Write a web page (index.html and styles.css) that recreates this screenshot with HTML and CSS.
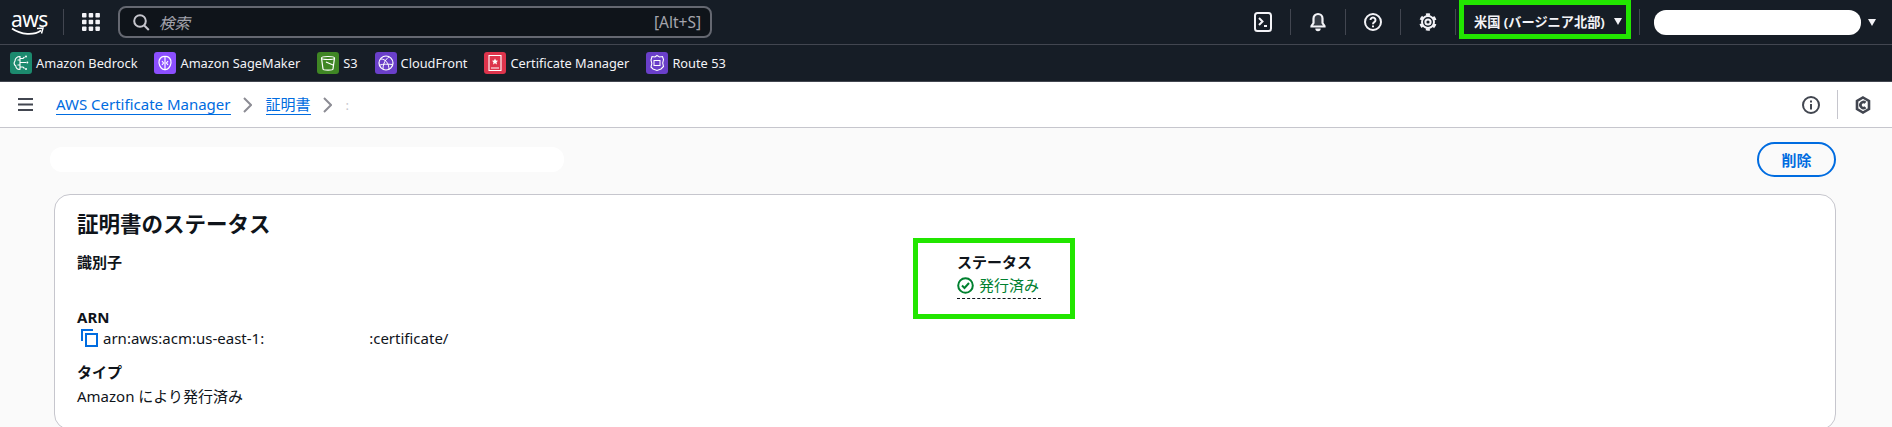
FILE: index.html
```html
<!DOCTYPE html>
<html lang="ja">

<head>
    <meta charset="UTF-8">
    <title>証明書のステータス</title>
    <link rel="stylesheet" href="styles.css">
</head>

<body>
    <header class="topbar">
        <div class="logo">
            <span class="logo_text">aws</span>
            <svg class="logo_smile" width="34" height="9" viewBox="0 0 34 9"><path d="M1 1.500C10 8 23 8.500 30 3.500" fill="none" stroke="#fff" stroke-width="1.800"/><path d="M26 1.500L32 1L30.500 6.500" fill="none" stroke="#fff" stroke-width="1.500"/></svg>
        </div>
        <span class="sep sep_logo"></span>
        <svg class="apps" width="18" height="18" viewBox="0 0 18 18" fill="#f3f3f7"><rect width="4.500" height="4.500" rx=".8"/><rect x="6.700" width="4.500" height="4.500" rx=".8"/><rect x="13.400" width="4.500" height="4.500" rx=".8"/><rect y="6.700" width="4.500" height="4.500" rx=".8"/><rect x="6.700" y="6.700" width="4.500" height="4.500" rx=".8"/><rect x="13.400" y="6.700" width="4.500" height="4.500" rx=".8"/><rect y="13.400" width="4.500" height="4.500" rx=".8"/><rect x="6.700" y="13.400" width="4.500" height="4.500" rx=".8"/><rect x="13.400" y="13.400" width="4.500" height="4.500" rx=".8"/></svg>
        <div class="search">
            <svg width="17" height="17" viewBox="0 0 17 17" fill="none" stroke="#c6c6cd" stroke-width="2"><circle cx="7" cy="7" r="5.800"/><path d="M11 11.200L15.800 16"/></svg>
            <span class="search_ph">検索</span>
            <span class="search_key">[Alt+S]</span>
        </div>

        <div class="top_right">
            <svg class="top_icon" width="18" height="20" viewBox="0 0 18 20" fill="none" stroke="#f3f3f7" stroke-width="2"><rect x="1" y="1" width="16" height="18" rx="2.500"/><path d="M5 6l3.500 3.500L5 13M10 14h3"/></svg>
            <span class="sep"></span>
            <svg class="top_icon" width="18" height="20" viewBox="0 0 18 20" fill="#f3f3f7"><path d="M9 2a4.500 4.500 0 0 0-4.500 4.500V11L2.500 14v.5h13V14l-2-3V6.500A4.500 4.500 0 0 0 9 2z" fill="#f3f3f7" fill-opacity=".15" stroke="#f3f3f7" stroke-width="2.200"/><path d="M6.300 16.500h5.400a2.700 2.700 0 0 1-5.400 0z"/></svg>
            <span class="sep"></span>
            <svg class="top_icon" width="18" height="18" viewBox="0 0 18 18" fill="none" stroke="#f3f3f7" stroke-width="2"><circle cx="9" cy="9" r="8"/><path d="M6.500 7a2.500 2.500 0 1 1 3.800 2.100C9.400 9.700 9 10.200 9 11.200"/><path d="M9 12.500v1.800"/></svg>
            <span class="sep"></span>
            <svg class="top_icon" width="18" height="18" viewBox="0 0 18 18" fill="none" stroke="#f3f3f7"><circle cx="9" cy="9" r="6" stroke-width="2"/><circle cx="9" cy="9" r="7.500" stroke-width="2.400" stroke-dasharray="3.900 3.950" transform="rotate(-105 9 9)"/><circle cx="9" cy="9" r="2.600" stroke-width="2"/></svg>
            <span class="sep"></span>
            <div class="region">
                <span>米国 (バージニア北部)</span>
                <span class="caret"></span>
            </div>
            <span class="sep sep_user"></span>
            <span class="user_mask"></span>
            <span class="caret caret_user"></span>
        </div>
    </header>

    <nav class="shortcuts">
        <a class="shortcut">
            <svg class="svc" viewBox="0 0 22 22"><rect width="22" height="22" rx="3" fill="#1c8a6e"/><path d="M10 4.500C7 4.500 5 6.500 5 9c-1.500 2-.5 4 .8 5 0 2.500 2.200 3.800 4.200 3.300zM10 8H7.500M10 13H7.500M10 10.500h6M10 6.500h3l1.500-1.500M10 15h3l1.500 1.500" fill="none" stroke="#fff" stroke-width="1.100"/><circle cx="16" cy="4.500" r="1" fill="#fff"/><circle cx="17.300" cy="10.500" r="1" fill="#fff"/><circle cx="16" cy="17" r="1" fill="#fff"/></svg>
            Amazon Bedrock
        </a>
        <a class="shortcut">
            <svg class="svc" viewBox="0 0 22 22"><rect width="22" height="22" rx="3" fill="#8c4fff"/><path d="M11 4.500v13M11 4.500C7 4 4.500 7.500 5 11s3 7 6 6.500M11 4.500c4-.5 6.500 3 6 6.500s-3 7-6 6.500M8 9l1.500 2L8 13M14 9l-1.500 2 1.500 2" fill="none" stroke="#fff" stroke-width="1.200"/></svg>
            Amazon SageMaker
        </a>
        <a class="shortcut">
            <svg class="svc" viewBox="0 0 22 22"><rect width="22" height="22" rx="3" fill="#3f8624"/><path d="M4.500 6c0-2 13-2 13 0l-1.500 11c0 1.500-10 1.500-10 0zM4.500 6c0 2 13 2 13 0M9 10l7 3" fill="none" stroke="#fff" stroke-width="1.200"/></svg>
            S3
        </a>
        <a class="shortcut">
            <svg class="svc" viewBox="0 0 22 22"><rect width="22" height="22" rx="3" fill="#6a3fc9"/><circle cx="11" cy="11" r="7" fill="none" stroke="#fff" stroke-width="1.200"/><path d="M6 7c4 0 8 4 8 10.500M14 4.800C11 7 8 11 8 17M5 13c3-1 8-1 12.500-.5" fill="none" stroke="#fff" stroke-width="1"/></svg>
            CloudFront
        </a>
        <a class="shortcut">
            <svg class="svc" viewBox="0 0 22 22"><rect width="22" height="22" rx="3" fill="#dd344c"/><path d="M5 3.500h12v15H5zM7 16h8" fill="none" stroke="#fff" stroke-width="1.100"/><path d="M11 6.500l1 2 2 .2-1.500 1.500.5 2.200-2-1.100-2 1.100.5-2.200L8 8.700l2-.2z" fill="#fff"/></svg>
            Certificate Manager
        </a>
        <a class="shortcut">
            <svg class="svc" viewBox="0 0 22 22"><rect width="22" height="22" rx="3" fill="#6a3fc9"/><path d="M11 3.500l2.500 1.500 3-.5 1 3-.8 3.500.8 3.500-2.500 2.500-4 1.500-4-1.500L5 15l.8-3.500L5 8l1-3.500 3 .5z" fill="none" stroke="#fff" stroke-width="1.100"/><rect x="8" y="8.500" width="6" height="5" fill="none" stroke="#fff" stroke-width="1"/></svg>
            Route 53
        </a>
    </nav>

    <div class="crumbbar">
        <svg class="burger" width="17" height="15" viewBox="0 0 17 15" fill="none" stroke="#424650" stroke-width="2"><path d="M1 2h15M1 7.500h15M1 13h15"/></svg>
        <a class="crumb crumb_first">AWS Certificate Manager</a>
        <svg class="chev" width="9" height="16" viewBox="0 0 9 16" fill="none" stroke="#8c8c94" stroke-width="2"><path d="M1 1l7 7-7 7"/></svg>
        <a class="crumb">証明書</a>
        <svg class="chev" width="9" height="16" viewBox="0 0 9 16" fill="none" stroke="#8c8c94" stroke-width="2"><path d="M1 1l7 7-7 7"/></svg>
        <span class="crumb_cut">:</span>
        <div class="crumb_right">
            <svg width="18" height="18" viewBox="0 0 18 18" fill="none" stroke="#424650" stroke-width="2"><circle cx="9" cy="9" r="8"/><path d="M9 8v5.500M9 4.500v2"/></svg>
            <span class="crumb_sep"></span>
            <svg width="16" height="18" viewBox="0 0 16 18" fill="none" stroke="#424650" stroke-width="2.600"><path d="M8 1.500l6 3.500v8l-6 3.500L2 13V5z"/><path d="M10.500 6.800a3 3 0 1 0 0 4.400"/></svg>
        </div>
    </div>

    <main class="content">
        <div class="page_head">
            <span class="title_mask"></span>
            <button class="btn">削除</button>
        </div>

        <section class="card">
            <h2>証明書のステータス</h2>
            <div class="card_cols">
                <div class="col_left">
                    <div class="field field_id">
                        <h3>識別子</h3>
                    </div>
                    <div class="field field_arn">
                        <h3>ARN</h3>
                        <p class="arn">
                            <svg width="17" height="18" viewBox="0 0 17 18" fill="none" stroke="#006ce0" stroke-width="2"><path d="M1 12V1h11"/><rect x="5" y="5" width="11" height="12"/></svg>
                            <span>arn:aws:acm:us-east-1:</span><span class="arn_gap"></span><span>:certificate/</span>
                        </p>
                    </div>
                    <div class="field">
                        <h3>タイプ</h3>
                        <p class="type_val">Amazon により発行済み</p>
                    </div>
                </div>
                <div class="status_box">
                    <h3>ステータス</h3>
                    <p class="status">
                        <svg width="17" height="17" viewBox="0 0 17 17" fill="none" stroke="#00802f" stroke-width="2"><circle cx="8.500" cy="8.500" r="7.300"/><path d="M5 8.500l2.500 2.500L12 6"/></svg>
                        <span>発行済み</span>
                    </p>
                </div>
            </div>
        </section>
    </main>
</body>

</html>
```

FILE: styles.css
```css
* {
    box-sizing: border-box;
}

html,
body {
    height: 427px;
    overflow: hidden;
}

body {
    margin: 0;
    background-color: #fafafa;
    color: #0f141a;
    font-family: "Noto Sans", "Noto Sans CJK JP", sans-serif;
    font-size: 15px;
}

h2,
h3,
p {
    margin: 0;
}

/* top bar */
.topbar {
    display: flex;
    align-items: center;
    height: 45px;
    padding-left: 11px;
    background-color: #161d26;
    border-bottom: 1px solid #424650;
}

.logo {
    position: relative;
    width: 34px;
    height: 26px;
    color: #fff;
}

.logo_text {
    display: block;
    font-size: 21px;
    line-height: 21px;
    text-align: center;
    letter-spacing: -0.5px;
}

.logo_smile {
    position: absolute;
    left: 0;
    top: 18px;
}

.sep {
    width: 1px;
    height: 26px;
    background-color: #424650;
}

.sep_logo {
    margin: 0 18px;
}

.apps {
    margin-right: 18px;
}

.search {
    display: flex;
    align-items: center;
    width: 594px;
    height: 32px;
    padding: 0 9px 0 13px;
    background-color: #0f141a;
    border: 2px solid #656871;
    border-radius: 8px;
    color: #a4a4ad;
}

.search_ph {
    margin-left: 9px;
    font-style: italic;
    font-size: 15.500px;
}

.search_key {
    margin-left: auto;
    font-size: 15.500px;
}

.top_right {
    display: flex;
    align-items: center;
    margin-left: auto;
}

.top_icon {
    margin: 0 18px;
}

.region {
    display: flex;
    align-items: center;
    gap: 9px;
    width: 172px;
    height: 39px;
    margin: 0 8px 5px 3px;
    padding: 3px 0 0 10px;
    border: 5px solid #22e600;
    color: #f3f3f7;
    font-weight: 700;
    font-size: 13.200px;
}

.caret {
    width: 0;
    height: 0;
    border-left: 4px solid transparent;
    border-right: 4px solid transparent;
    border-top: 7px solid #f3f3f7;
}

.user_mask {
    width: 207px;
    height: 25px;
    margin-left: 14px;
    background-color: #fff;
    border-radius: 12px;
}

.caret_user {
    margin: 0 16px 0 7px;
}

/* favorites */
.shortcuts {
    display: flex;
    align-items: center;
    gap: 17px;
    height: 36px;
    padding-left: 10px;
    background-color: #161d26;
}

.shortcut {
    display: flex;
    align-items: center;
    gap: 4px;
    color: #f3f3f7;
    font-size: 12.800px;
}

.svc {
    width: 22px;
    height: 22px;
}

/* breadcrumbs */
.crumbbar {
    display: flex;
    align-items: center;
    height: 47px;
    padding-left: 17px;
    background-color: #fff;
    border-top: 1px solid #424650;
    border-bottom: 1px solid #c6c6cd;
}

.crumb {
    color: #006ce0;
    font-size: 15px;
    line-height: 20px;
    border-bottom: 1px solid #006ce0;
}

.crumb_first {
    margin-left: 22px;
}

.chev {
    margin: 0 14px 0 12px;
}

.crumb_cut {
    color: #c6c6cd;
    font-size: 13px;
}

.crumb_right {
    display: flex;
    align-items: center;
    margin-left: auto;
    margin-right: 21px;
}

.crumb_sep {
    width: 1px;
    height: 29px;
    margin: 0 17px;
    background-color: #c6c6cd;
}

/* content */
.content {
    padding: 13px 56px 0 54px;
}

.page_head {
    display: flex;
    align-items: center;
    justify-content: space-between;
    height: 36px;
    margin-bottom: 17px;
}

.title_mask {
    width: 514px;
    height: 25px;
    margin-left: -4px;
    background-color: #fff;
    border-radius: 12px;
}

.btn {
    width: 79px;
    height: 35px;
    padding: 0;
    background-color: transparent;
    border: 2px solid #006ce0;
    border-radius: 18px;
    color: #006ce0;
    font-family: inherit;
    font-size: 15px;
    font-weight: 700;
}

.card {
    height: 236px;
    padding: 14px 22px;
    background-color: #fff;
    border: 1px solid #c6c6cd;
    border-radius: 16px;
}

.card h2 {
    font-size: 21.500px;
    line-height: 30px;
    font-weight: 700;
}

.card h3 {
    font-size: 15px;
    line-height: 20px;
    font-weight: 700;
}

.card p {
    line-height: 22px;
}

.card_cols {
    display: flex;
}

.col_left {
    width: 836px;
    padding-top: 13px;
}

.field_id {
    height: 55px;
}

.field_arn {
    height: 55px;
}

.arn {
    display: flex;
    align-items: center;
}

.arn svg {
    margin: 0 5px 0 4px;
}

.arn_gap {
    width: 105px;
}

.card .type_val {
    margin-top: 3px;
}

.status_box {
    width: 162px;
    height: 81px;
    margin-top: -1px;
    padding: 9px 0 0 39px;
    border: 5px solid #22e600;
}

.card .status {
    display: flex;
    align-items: center;
    gap: 5px;
    width: 84px;
    margin-top: 2px;
    padding-bottom: 2px;
    border-bottom: 1px dashed #0f141a;
    color: #00802f;
}
```
